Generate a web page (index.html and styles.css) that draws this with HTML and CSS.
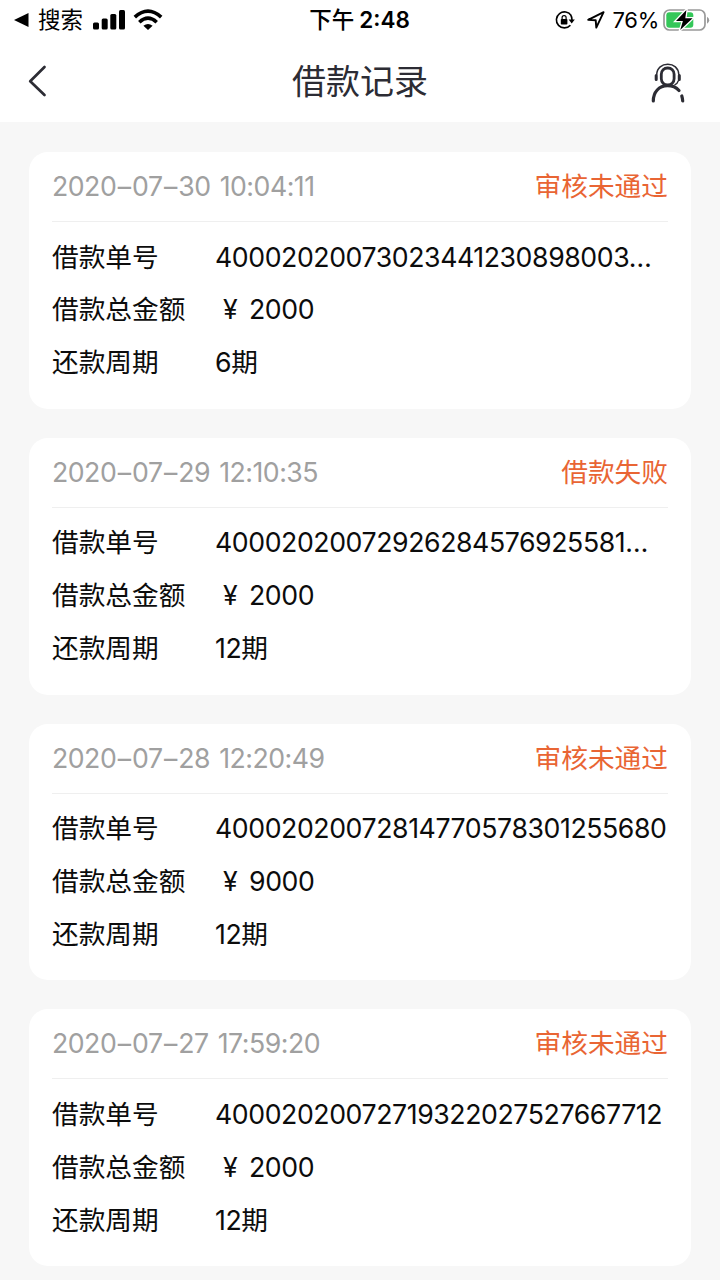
FILE: index.html
```html
<!DOCTYPE html>
<html lang="zh-CN">
<head>
    <meta charset="UTF-8">
    <meta name="viewport" content="width=device-width, initial-scale=1.0">
    <title>借款记录</title>
    <link rel="stylesheet" href="styles.css">
</head>
<body>
    <header class="header">
        <div class="status-bar">
            <div class="status-left">
                <svg class="icon-back-app" width="15" height="14" viewBox="0 0 15 14"><path d="M0 7L14.5 0v14z"/></svg>
                <span class="search">搜索</span>
                <svg class="icon-signal" width="33" height="20" viewBox="0 0 33 20">
                    <rect x="0" y="12.5" width="6" height="7" rx="1.5"/>
                    <rect x="8.7" y="8.5" width="6" height="11" rx="1.5"/>
                    <rect x="17.3" y="4" width="6" height="15.5" rx="1.5"/>
                    <rect x="26" y="0" width="6" height="19.5" rx="1.5"/>
                </svg>
                <svg class="icon-wifi" width="30" height="22" viewBox="0 0 30 22" fill="none" stroke="#000" stroke-width="3.6">
                    <path d="M1.8 8.2Q15-3.8 28.2 8.2"/>
                    <path d="M6.3 13.2Q15 5.2 23.7 13.2"/>
                    <path d="M15 21L10.4 16.8Q15 13 19.6 16.8z" fill="#000" stroke="none"/>
                </svg>
            </div>
            <div class="status-time">下午<b>2:48</b></div>
            <div class="status-right">
                <svg class="icon-lock" width="20" height="18" viewBox="0 0 20 18">
                    <path d="M16.2 4.7A8 8 0 1 0 15.4 14.2M15.6 3.8Q17 6 17 9" fill="none" stroke="#000" stroke-width="1.6"/>
                    <path d="M13.6 8.6h6.2l-3.1 4z"/>
                    <rect x="5.8" y="8" width="6.6" height="5.6" rx=".8"/>
                    <path d="M7.1 8.2V6.6a2 2 0 0 1 4 0v1.6" fill="none" stroke="#000" stroke-width="1.2"/>
                </svg>
                <svg class="icon-location" width="18" height="18" viewBox="0 0 18 18" fill="none" stroke="#000" stroke-width="1.9" stroke-linejoin="round"><path d="M1.2 8.8L16.6 1.2L9.3 16.6L8.7 9.2z"/></svg>
                <span class="percent">76%</span>
                <svg class="icon-battery" width="46" height="22" viewBox="0 0 46 22">
                    <rect x="1" y="1" width="41" height="20" rx="5.5" fill="none" stroke="#999" stroke-width="1.7"/>
                    <path d="M44 7.7q2.2 1 2.2 3.5T44 14.7z" fill="#999"/>
                    <rect x="3.3" y="3.3" width="27" height="15.4" rx="3" fill="#34c759"/>
                    <path d="M23.4 1L13 12h6.9L17.2 21 29.6 9.2h-7.3z" stroke="#fff" stroke-width="2.6" paint-order="stroke"/>
                </svg>
            </div>
        </div>
        <div class="nav-bar">
            <svg class="icon-back" width="20" height="32" viewBox="0 0 20 32" fill="none" stroke="#2c2c34" stroke-width="2.7" stroke-linecap="round" stroke-linejoin="round"><path d="M16.5 2L2.2 16.2L16.5 30"/></svg>
            <h1>借款记录</h1>
            <svg class="icon-service" width="34" height="40" viewBox="0 0 34 40" fill="none" stroke="#2c2c34" stroke-linecap="round">
                <rect x="10.3" y="5" width="12.8" height="17" rx="6.2" stroke-width="2.8"/>
                <path d="M5.7 11.5C6 4.8 11 1.2 16.8 1.2S27.5 4.8 27.8 11.5" stroke-width="1.5"/>
                <path d="M5.2 12.5v4M28.3 12.5v4" stroke-width="3"/>
                <path d="M27.5 17.5Q26.5 20.5 24 21.7" stroke-width="1.3"/>
                <path d="M2.3 38C2.3 29 8 22.7 16.5 22.7Q23.8 22.7 28 27.5M30.8 33Q31.5 35.3 31.7 38" stroke-width="3.2"/>
            </svg>
        </div>
    </header>

    <main class="list">
        <section class="card">
            <div class="card-top">
                <span class="date">2020<i>–</i>07<i>–</i>30 10:04:11</span>
                <span class="state">审核未通过</span>
            </div>
            <div class="row"><span class="label">借款单号</span><span class="number">40002020073023441230898003…</span></div>
            <div class="row"><span class="label">借款总金额</span><span class="value"><i class="yen">¥</i>2000</span></div>
            <div class="row"><span class="label">还款周期</span><span class="value">6期</span></div>
        </section>

        <section class="card">
            <div class="card-top">
                <span class="date">2020<i>–</i>07<i>–</i>29 12:10:35</span>
                <span class="state">借款失败</span>
            </div>
            <div class="row"><span class="label">借款单号</span><span class="number">40002020072926284576925581…</span></div>
            <div class="row"><span class="label">借款总金额</span><span class="value"><i class="yen">¥</i>2000</span></div>
            <div class="row"><span class="label">还款周期</span><span class="value">12期</span></div>
        </section>

        <section class="card">
            <div class="card-top">
                <span class="date">2020<i>–</i>07<i>–</i>28 12:20:49</span>
                <span class="state">审核未通过</span>
            </div>
            <div class="row"><span class="label">借款单号</span><span class="number">40002020072814770578301255680</span></div>
            <div class="row"><span class="label">借款总金额</span><span class="value"><i class="yen">¥</i>9000</span></div>
            <div class="row"><span class="label">还款周期</span><span class="value">12期</span></div>
        </section>

        <section class="card">
            <div class="card-top">
                <span class="date">2020<i>–</i>07<i>–</i>27 17:59:20</span>
                <span class="state">审核未通过</span>
            </div>
            <div class="row"><span class="label">借款单号</span><span class="number">40002020072719322027527667712</span></div>
            <div class="row"><span class="label">借款总金额</span><span class="value"><i class="yen">¥</i>2000</span></div>
            <div class="row"><span class="label">还款周期</span><span class="value">12期</span></div>
        </section>
    </main>
</body>
</html>
```
FILE: styles.css
```css
* {
    margin: 0;
    padding: 0;
    box-sizing: border-box;
}
body {
    height: 1280px;
    overflow: hidden;
    background-color: #f7f7f7;
    color: #0c0c0c;
    font-family: Inter, "Noto Sans CJK SC", sans-serif;
    font-size: 26.7px;
}
i {
    font-style: normal;
}
svg {
    display: block;
    flex: none;
    overflow: visible;
}
.header {
    height: 122px;
    background-color: white;
}
.status-bar {
    display: grid;
    grid-template-columns: 1fr auto 1fr;
    align-items: center;
    height: 40px;
    padding: 0 11px 0 14px;
    color: black;
    font-size: 22.5px;
    line-height: 40px;
}
.status-left,
.status-right {
    display: flex;
    align-items: center;
}
.status-right {
    justify-content: flex-end;
}
.search {
    margin: 0 10px 0 9px;
}
.icon-wifi {
    margin-left: 7px;
}
.status-time {
    margin-right: 4px;
    font-weight: 500;
}
.status-time b {
    margin-left: 5px;
    font-weight: 600;
}
.icon-location {
    margin: 0 8px 0 12px;
}
.percent {
    margin-right: 4px;
    font-size: 22px;
    letter-spacing: -0.3px;
}
.nav-bar {
    display: grid;
    grid-template-columns: 1fr auto 1fr;
    align-items: center;
    height: 82px;
    padding: 0 35px 0 28px;
}
.nav-bar h1 {
    margin-left: 7px;
    padding-top: 2px;
    color: #2c2c34;
    font-size: 34px;
    font-weight: 400;
    line-height: 80px;
}
.icon-service {
    margin-top: 4px;
    justify-self: end;
}
.list {
    display: flex;
    flex-direction: column;
    gap: 29px;
    padding: 30px 29px;
}
.card {
    height: 256.8px;
    flex: none;
    padding: 0 23px;
    background-color: white;
    border-radius: 19px;
}
.card-top {
    display: flex;
    justify-content: space-between;
    height: 70px;
    margin-bottom: 8.7px;
    border-bottom: 1px solid #efefef;
    line-height: 69.5px;
}
.date {
    color: #a0a0a0;
    letter-spacing: -0.5px;
    word-spacing: 2px;
}
.date i {
    margin: 0 1.5px;
}
.state {
    color: #e96534;
}
.row {
    display: flex;
    height: 52.8px;
    line-height: 52.8px;
    white-space: nowrap;
}
.label {
    width: 163px;
    flex: none;
}
.number,
.value {
    letter-spacing: -0.42px;
}
.yen {
    display: inline-block;
    width: 34px;
    padding-left: 8px;
}
```
